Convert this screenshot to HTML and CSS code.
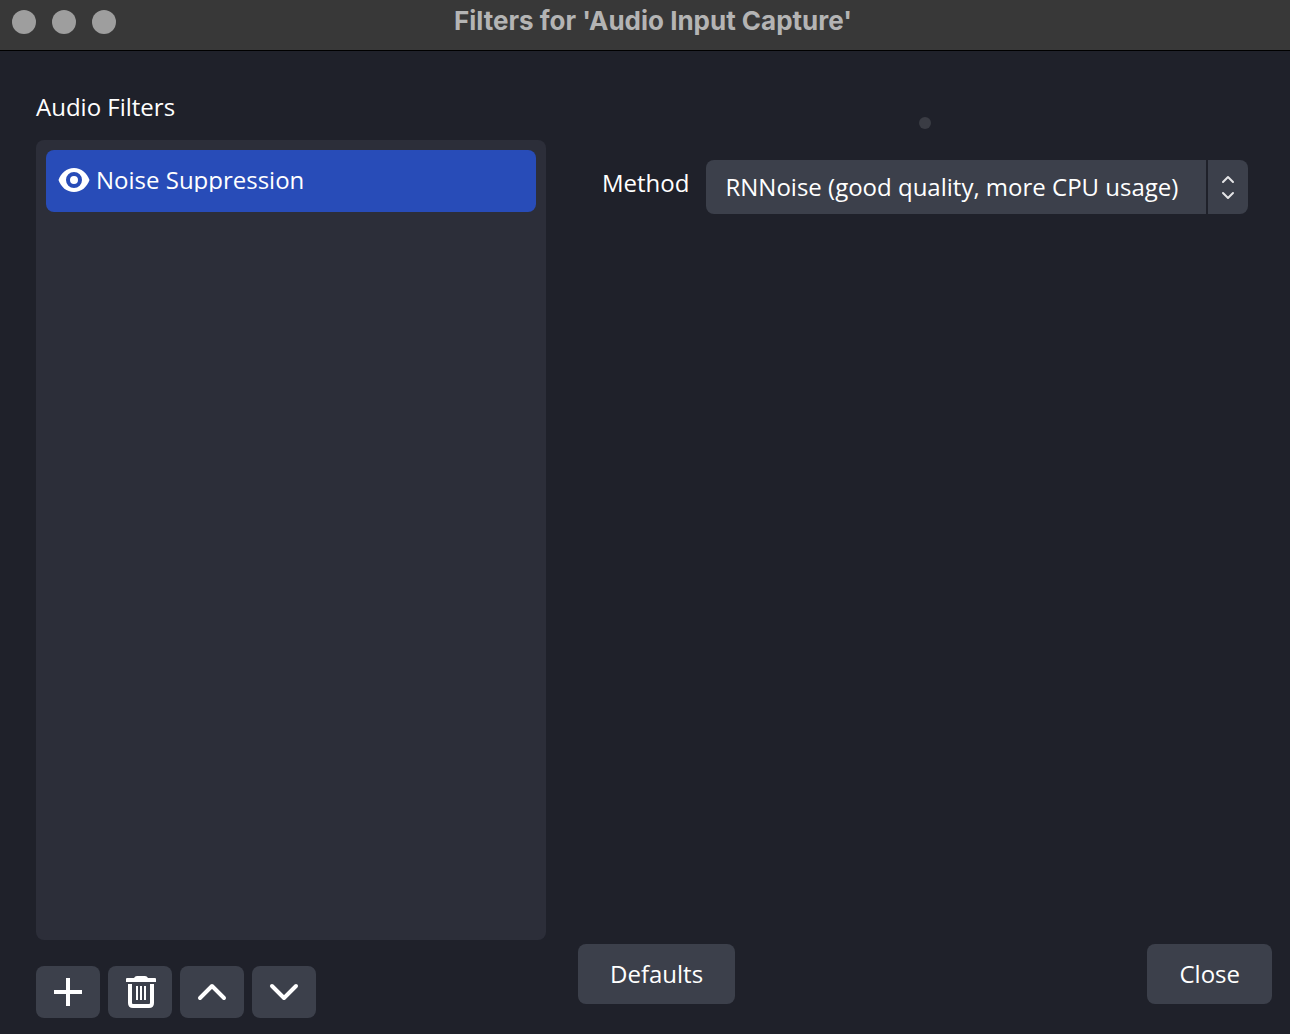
FILE: index.html
```html
<!DOCTYPE html>
<html lang="en">
<head>
<meta charset="utf-8">
<meta name="viewport" content="width=device-width, initial-scale=1">
<title>Filters for 'Audio Input Capture'</title>
<link rel="stylesheet" href="styles.css">
</head>
<body>
<header class="titlebar">
  <div class="window-controls">
    <button class="window-dot" type="button" aria-label="Close window"></button>
    <button class="window-dot" type="button" aria-label="Minimize window"></button>
    <button class="window-dot" type="button" aria-label="Zoom window"></button>
  </div>
  <h1 class="window-title">Filters for 'Audio Input Capture'</h1>
</header>
<main class="dialog">
  <section class="filters">
    <h2 class="filters-heading">Audio Filters</h2>
    <ul class="filter-list">
      <li class="filter-item">
        <button class="visibility" type="button" aria-label="Toggle visibility">
          <svg width="32" height="24" viewBox="0 0 32 24" aria-hidden="true">
            <path fill="#fff" fill-rule="evenodd" d="M16 0C8.500 0 3 5 .5 12C3 19 8.500 24 16 24S29 19 31.500 12C29 5 23.500 0 16 0ZM16 4a8 8 0 1 1 0 16a8 8 0 1 1 0-16ZM16 8a4 4 0 1 0 0 8a4 4 0 1 0 0-8Z"/>
          </svg>
        </button>
        <span class="filter-name">Noise Suppression</span>
      </li>
    </ul>
    <div class="toolbar">
      <button class="tool" type="button" aria-label="Add filter">
        <svg width="32" height="32" viewBox="0 0 32 32" aria-hidden="true"><path fill="#fff" d="M14 2h4v12h12v4H18v12h-4V18H2v-4h12z"/></svg>
      </button>
      <button class="tool" type="button" aria-label="Remove filter">
        <svg width="32" height="32" viewBox="0 0 32 32" aria-hidden="true">
          <path fill="#fff" d="M10 2Q11 0 13 0H21Q23 0 24 2H31Q32 2 32 3V6H2V3Q2 2 3 2Z"/>
          <path fill="none" stroke="#fff" stroke-width="4" d="M6 8V27Q6 30 9 30H25Q28 30 28 27V8"/>
          <path fill="none" stroke="#fff" stroke-width="2" d="M13 10V24M17 10V24M21 10V24"/>
        </svg>
      </button>
      <button class="tool" type="button" aria-label="Move up">
        <svg width="32" height="32" viewBox="0 0 32 32" aria-hidden="true"><path fill="none" stroke="#fff" stroke-width="4" stroke-linecap="round" stroke-linejoin="round" d="M4 22L16 10L28 22"/></svg>
      </button>
      <button class="tool" type="button" aria-label="Move down">
        <svg width="32" height="32" viewBox="0 0 32 32" aria-hidden="true"><path fill="none" stroke="#fff" stroke-width="4" stroke-linecap="round" stroke-linejoin="round" d="M4 10L16 22L28 10"/></svg>
      </button>
    </div>
  </section>
  <section class="settings">
    <div class="splitter"></div>
    <div class="property">
      <label class="property-label" for="method">Method</label>
      <div class="combo">
        <select class="combo-select" id="method">
          <option>RNNoise (good quality, more CPU usage)</option>
          <option>Speex (low CPU usage, low quality)</option>
        </select>
        <span class="combo-arrows">
          <svg width="14" height="26" viewBox="0 0 14 26" aria-hidden="true"><path fill="none" stroke="#e4e4e6" stroke-width="2" stroke-linecap="round" stroke-linejoin="round" d="M2 8L7 3L12 8M2 19L7 24L12 19"/></svg>
        </span>
      </div>
    </div>
    <div class="actions">
      <button class="action" type="button">Defaults</button>
      <button class="action" type="button">Close</button>
    </div>
  </section>
</main>
</body>
</html>
```
FILE: styles.css
```css
* {
  box-sizing: border-box;
}

body {
  margin: 0;
  min-height: 100vh;
  display: flex;
  flex-direction: column;
  background: #1f212a;
  color: #fff;
  font: 24px/32px "Open Sans", "Noto Sans", sans-serif;
}

button {
  margin: 0;
  padding: 0;
  border: 0;
  color: inherit;
  font: inherit;
}

svg {
  display: block;
}

.titlebar {
  display: grid;
  grid-template-columns: 120px 1fr 116px;
  align-items: center;
  padding: 0 0 6px 12px;
  height: 51px;
  background: #383838;
  border-bottom: 1px solid #000;
}

.window-controls {
  display: flex;
  gap: 16px;
}

.window-dot {
  width: 24px;
  height: 24px;
  border-radius: 50%;
  background: #9e9e9e;
}

.window-title {
  margin: 0;
  padding-bottom: 2px;
  color: #b4b4b4;
  text-align: center;
  font: bold 26px/32px Inter, sans-serif;
}

.dialog {
  flex: 1;
  display: grid;
  grid-template-columns: 510px 1fr;
  gap: 32px;
  padding: 40px 18px 16px 36px;
}

.filters {
  display: flex;
  flex-direction: column;
}

.filters-heading {
  margin: 0 0 17px;
  font: inherit;
}

.filter-list {
  flex: 1;
  margin: 0;
  padding: 10px;
  list-style: none;
  background: #2c2e39;
  border-radius: 8px;
}

.filter-item {
  display: flex;
  align-items: center;
  gap: 6px;
  height: 62px;
  padding: 0 12px 2px;
  background: #284cb8;
  border-radius: 8px;
}

.visibility {
  background: none;
}

.filter-name {
  height: 24px;
  line-height: 24px;
  overflow: hidden;
}

.toolbar {
  display: flex;
  gap: 8px;
  margin-top: 26px;
}

.tool {
  display: grid;
  place-items: center;
  width: 64px;
  height: 52px;
  background: #3c404b;
  border-radius: 8px;
}

.settings {
  display: flex;
  flex-direction: column;
}

.splitter {
  width: 12px;
  height: 12px;
  margin: 26px 0 31px;
  align-self: center;
  background: #3a3c44;
  border-radius: 50%;
}

.property {
  display: flex;
  align-items: flex-start;
  gap: 17px;
  padding: 0 24px;
}

.property-label {
  padding-top: 7px;
}

.combo {
  position: relative;
  flex: 1;
  display: flex;
}

.combo-select {
  flex: 1;
  min-width: 0;
  height: 54px;
  margin: 0;
  padding: 0 48px 0 19px;
  appearance: none;
  border: 0;
  border-radius: 8px;
  background: #3c404b;
  color: inherit;
  font: inherit;
}

.combo-arrows {
  position: absolute;
  top: 0;
  right: 0;
  bottom: 0;
  width: 42px;
  display: grid;
  place-items: center;
  border-left: 2px solid #1f212a;
  pointer-events: none;
}

.actions {
  display: flex;
  justify-content: space-between;
  margin-top: auto;
  padding-bottom: 14px;
}

.action {
  height: 60px;
  padding: 0 32px;
  background: #3c404b;
  border-radius: 8px;
}
```
